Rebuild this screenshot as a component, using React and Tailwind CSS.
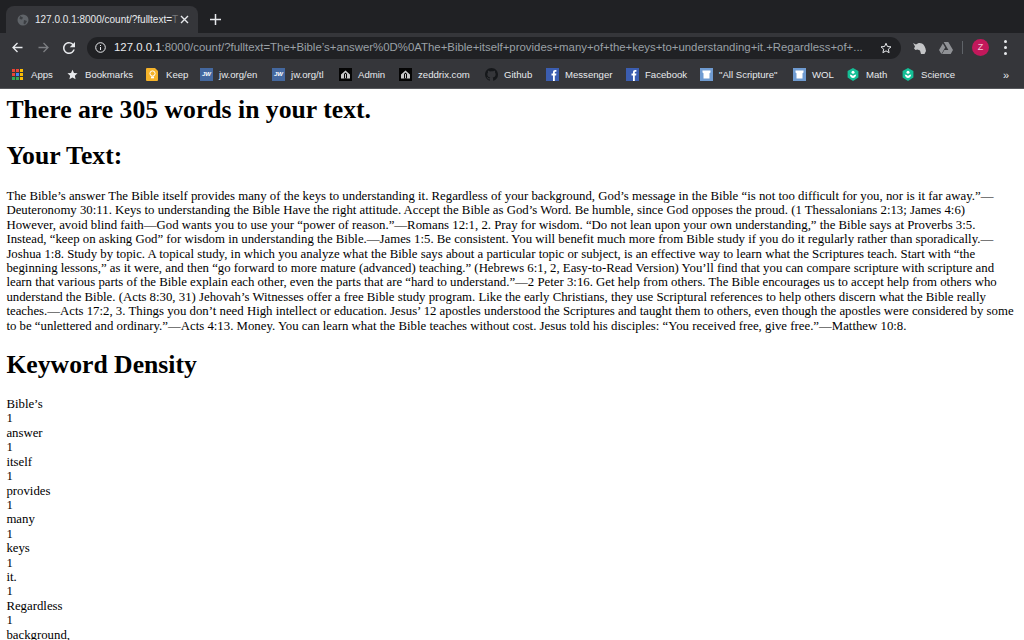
import React from 'react'

const bodyText = `The Bible’s answer The Bible itself provides many of the keys to understanding it. Regardless of your background, God’s message in the Bible “is not too difficult for you, nor is it far away.”—Deuteronomy 30:11. Keys to understanding the Bible Have the right attitude. Accept the Bible as God’s Word. Be humble, since God opposes the proud. (1 Thessalonians 2:13; James 4:6) However, avoid blind faith—God wants you to use your “power of reason.”—Romans 12:1, 2. Pray for wisdom. “Do not lean upon your own understanding,” the Bible says at Proverbs 3:5. Instead, “keep on asking God” for wisdom in understanding the Bible.—James 1:5. Be consistent. You will benefit much more from Bible study if you do it regularly rather than sporadically.—Joshua 1:8. Study by topic. A topical study, in which you analyze what the Bible says about a particular topic or subject, is an effective way to learn what the Scriptures teach. Start with “the beginning lessons,” as it were, and then “go forward to more mature (advanced) teaching.” (Hebrews 6:1, 2, Easy-to-Read Version) You’ll find that you can compare scripture with scripture and learn that various parts of the Bible explain each other, even the parts that are “hard to understand.”—2 Peter 3:16. Get help from others. The Bible encourages us to accept help from others who understand the Bible. (Acts 8:30, 31) Jehovah’s Witnesses offer a free Bible study program. Like the early Christians, they use Scriptural references to help others discern what the Bible really teaches.—Acts 17:2, 3. Things you don’t need High intellect or education. Jesus’ 12 apostles understood the Scriptures and taught them to others, even though the apostles were considered by some to be “unlettered and ordinary.”—Acts 4:13. Money. You can learn what the Bible teaches without cost. Jesus told his disciples: “You received free, give free.”—Matthew 10:8.`

const keywords = ['Bible’s', 'answer', 'itself', 'provides', 'many', 'keys', 'it.', 'Regardless']

function AppsIcon() {
  const colors = ['#ea4335', '#ea4335', '#fbbc04', '#ea4335', '#4285f4', '#fbbc04', '#34a853', '#34a853', '#fbbc04']
  return (
    <div className="grid grid-cols-3 gap-px w-[11px] h-[11px]">
      {colors.map((c, i) => (
        <div key={i} className="w-[3px] h-[3px]" style={{ backgroundColor: c }} />
      ))}
    </div>
  )
}

function StarIcon() {
  return (
    <svg width="11" height="11" viewBox="0 0 24 24" fill="#e8eaed">
      <path d="M12 1.5l3.2 7.2 7.8.8-5.9 5.2 1.7 7.8-6.8-4-6.8 4 1.7-7.8L1 9.5l7.8-.8z" />
    </svg>
  )
}

function KeepIcon() {
  return (
    <svg width="13" height="13" viewBox="0 0 13 13">
      <path d="M1 0h8l3 3v9a1 1 0 01-1 1H1a1 1 0 01-1-1V1a1 1 0 011-1z" fill="#f5b32a" />
      <circle cx="6.5" cy="5.5" r="2.6" fill="none" stroke="#fff" strokeWidth="1" />
      <rect x="5" y="8.5" width="3" height="1.8" fill="#fff" />
    </svg>
  )
}

function JwIcon() {
  return (
    <div className="w-[13px] h-[13px] bg-[#44689f] text-white text-[6px] font-bold italic leading-[13px] text-center">JW</div>
  )
}

function AdminIcon() {
  return (
    <svg width="13" height="13" viewBox="0 0 13 13">
      <rect width="13" height="13" fill="#050505" />
      <path d="M6.5 2.5L11 6.5v4H2v-4z" fill="#c9c9c9" />
      <path d="M6.5 4.5L5 6v4.5h3V6z" fill="#050505" />
      <rect x="6" y="6" width="1" height="4" fill="#c9c9c9" />
    </svg>
  )
}

function GithubIcon() {
  return (
    <svg width="13" height="13" viewBox="0 0 16 16" fill="#16181b">
      <path d="M8 0C3.58 0 0 3.58 0 8c0 3.54 2.29 6.53 5.47 7.59.4.07.55-.17.55-.38v-1.34c-2.23.48-2.7-1.07-2.7-1.07-.36-.93-.89-1.17-.89-1.17-.73-.5.05-.49.05-.49.8.06 1.23.83 1.23.83.71 1.22 1.87.87 2.33.66.07-.52.28-.87.51-1.07-1.78-.2-3.64-.89-3.64-3.95 0-.87.31-1.59.82-2.15-.08-.2-.36-1.02.08-2.12 0 0 .67-.21 2.2.82A7.6 7.6 0 018 3.87c.68 0 1.36.09 2 .27 1.53-1.04 2.2-.82 2.2-.82.44 1.1.16 1.92.08 2.12.51.56.82 1.27.82 2.15 0 3.07-1.87 3.75-3.65 3.95.29.25.54.73.54 1.48v2.2c0 .21.15.46.55.38A8 8 0 0016 8c0-4.42-3.58-8-8-8z" />
    </svg>
  )
}

function FbIcon() {
  return (
    <svg width="13" height="13" viewBox="0 0 13 13">
      <rect width="13" height="13" fill="#3b5db0" />
      <path d="M7 13V7.5H5.5V5.6H7V4.3C7 2.8 7.9 2 9.2 2h1.2v1.8H9.6c-.6 0-.8.3-.8.8v1h1.6l-.3 1.9H8.8V13z" fill="#fff" />
    </svg>
  )
}

function WolIcon() {
  return (
    <svg width="13" height="13" viewBox="0 0 13 13">
      <rect width="13" height="13" fill="#6f9bd1" />
      <path d="M2.5 2.5h8v2l-1 .8V10.5h-6V5.3l-1-.8z" fill="#fff" />
    </svg>
  )
}

function KhanIcon() {
  return (
    <svg width="12" height="13" viewBox="0 0 12 13">
      <path d="M6 0l5.4 3v6.6L6 13 .6 9.6V3z" fill="#14bf96" />
      <circle cx="6" cy="4.3" r="1.5" fill="#fff" />
      <path d="M2.8 6.4c.2 2 1.5 3.3 3.2 3.5 1.7-.2 3-1.500 3.200-3.500-1.500.1-2.600.6-3.200 1.500-.6-.9-1.700-1.400-3.200-1.500z" fill="#fff" />
    </svg>
  )
}

const bookmarks = [
  { label: 'Apps', icon: <AppsIcon />, width: 'w-[55px]', gap: 'gap-[8px]' },
  { label: 'Bookmarks', icon: <StarIcon />, width: 'w-[79px]', gap: 'gap-[7px]' },
  { label: 'Keep', icon: <KeepIcon />, width: 'w-[54px]', gap: 'gap-[7px]' },
  { label: 'jw.org/en', icon: <JwIcon />, width: 'w-[72px]', gap: 'gap-[6px]' },
  { label: 'jw.org/tl', icon: <JwIcon />, width: 'w-[67px]', gap: 'gap-[6px]' },
  { label: 'Admin', icon: <AdminIcon />, width: 'w-[60px]', gap: 'gap-[6px]' },
  { label: 'zeddrix.com', icon: <AdminIcon />, width: 'w-[86px]', gap: 'gap-[6px]' },
  { label: 'Github', icon: <GithubIcon />, width: 'w-[61px]', gap: 'gap-[6px]' },
  { label: 'Messenger', icon: <FbIcon />, width: 'w-[80px]', gap: 'gap-[6px]' },
  { label: 'Facebook', icon: <FbIcon />, width: 'w-[74px]', gap: 'gap-[6px]' },
  { label: '"All Scripture"', icon: <WolIcon />, width: 'w-[93px]', gap: 'gap-[6px]' },
  { label: 'WOL', icon: <WolIcon />, width: 'w-[54px]', gap: 'gap-[6px]' },
  { label: 'Math', icon: <KhanIcon />, width: 'w-[55px]', gap: 'gap-[7px]' },
  { label: 'Science', icon: <KhanIcon />, width: 'w-[90px]', gap: 'gap-[7px]' },
]

function TabStrip() {
  return (
    <div className="flex items-end h-[33px] bg-[#202124] pl-[6px]">
      <div className="flex items-center w-[192px] h-[27px] bg-[#35363a] rounded-t-lg pl-[11px] pr-[9px]">
        <svg width="12" height="12" viewBox="0 0 12 12" className="shrink-0">
          <circle cx="6" cy="6" r="5.5" fill="#5f6368" />
          <path d="M3 2l3 1.5-1 2-2.500-.5zM7 6l3 1-2 3.500-1.500-1z" fill="#3c3f43" />
        </svg>
        <div className="ml-[6px] whitespace-nowrap text-[10px] text-[#e8eaed]">
          127.0.0.1:8000/count/?fulltext=<span className="text-[#77797c]">T</span>
        </div>
        <svg width="9" height="9" viewBox="0 0 9 9" className="ml-auto shrink-0" stroke="#e8eaed" strokeWidth="1.4">
          <path d="M1 1l7 7M8 1L1 8" />
        </svg>
      </div>
      <svg width="11" height="11" viewBox="0 0 11 11" className="ml-[12px] mb-[8px]" stroke="#e8eaed" strokeWidth="1.5">
        <path d="M5.5 0v11M0 5.5h11" />
      </svg>
    </div>
  )
}

function Toolbar() {
  return (
    <div className="flex items-center h-[29px] bg-[#35363a] pl-[12px]">
      <svg width="11" height="11" viewBox="0 0 11 11" fill="none" stroke="#e8eaed" strokeWidth="1.3">
        <path d="M10.5 5.5H1M5.500 1L1 5.500l4.500 4.500" />
      </svg>
      <svg width="11" height="11" viewBox="0 0 11 11" fill="none" stroke="#7c7e82" strokeWidth="1.3" className="ml-[15px]">
        <path d="M.5 5.500H10M5.500 1L10 5.500 5.500 10" />
      </svg>
      <svg width="12" height="12" viewBox="4 4 16 16" fill="#e8eaed" className="ml-[14px]">
        <path d="M17.650 6.350A7.958 7.958 0 0012 4c-4.420 0-7.990 3.580-7.990 8s3.570 8 7.990 8c3.730 0 6.840-2.550 7.730-6h-2.080A5.990 5.990 0 0112 18c-3.310 0-6-2.690-6-6s2.690-6 6-6c1.660 0 3.140.690 4.220 1.780L13 11h7V4l-2.350 2.350z" />
      </svg>
      <div className="flex items-center ml-[12px] w-[814px] h-[22px] rounded-full bg-[#202124] pl-[8px] pr-[9px]">
        <svg width="11" height="11" viewBox="0 0 11 11" fill="none" stroke="#e8eaed" strokeWidth="1" className="shrink-0">
          <circle cx="5.5" cy="5.5" r="4.800" />
          <path d="M5.500 5v3M5.500 3v1" />
        </svg>
        <div className="ml-[8px] whitespace-nowrap text-[11.4px] text-[#9aa0a6]">
          <span className="text-[#e8eaed]">127.0.0.1</span>:8000/count/?fulltext=The+Bible’s+answer%0D%0AThe+Bible+itself+provides+many+of+the+keys+to+understanding+it.+Regardless+of+...
        </div>
        <svg width="12" height="12" viewBox="0 0 24 24" fill="none" stroke="#e8eaed" strokeWidth="2" className="ml-auto shrink-0">
          <path d="M12 2.500l2.900 6.500 7.100.7-5.400 4.700 1.600 7-6.200-3.700-6.200 3.700 1.600-7L2 9.700l7.100-.7z" />
        </svg>
      </div>
      <svg width="13" height="12" viewBox="0 0 13 12" fill="#c4c5c7" className="ml-[12px]">
        <path d="M0 1l3 1.500C4.500 1 7 .500 9 1.500c2 1 3.500 3.500 4 7.500l-1.500 3H8L7 8.500 4.500 7.500 2.500 8 1 6.500l1-2z" />
      </svg>
      <svg width="14" height="12" viewBox="0 0 14 12" fill="#8f9195" className="ml-[13px]">
        <path d="M4.700 0h4.600l4.700 8H9.400zM3.800 1.500L6.200 5.600 2.400 12 0 8zM5.400 8H14l-2.300 4H3z" />
      </svg>
      <div className="ml-[9px] w-px h-[13px] bg-[#5f6368]" />
      <div className="flex items-center justify-center ml-[9px] w-[17px] h-[17px] rounded-full bg-[#c2185b] text-[9px] text-[#f5c6d8]">Z</div>
      <div className="flex flex-col gap-[3px] ml-[15px]">
        <div className="w-[3px] h-[3px] rounded-full bg-[#e8eaed]" />
        <div className="w-[3px] h-[3px] rounded-full bg-[#e8eaed]" />
        <div className="w-[3px] h-[3px] rounded-full bg-[#e8eaed]" />
      </div>
    </div>
  )
}

function BookmarksBar() {
  return (
    <div className="flex items-center h-[27px] bg-[#35363a] pl-[12px] border-b border-[#56585c] text-[9.6px] text-[#e8eaed]">
      {bookmarks.map((b) => (
        <div key={b.label} className={`flex items-center shrink-0 ${b.width} ${b.gap}`}>
          <div className="shrink-0">{b.icon}</div>
          <span className="whitespace-nowrap">{b.label}</span>
        </div>
      ))}
      <span className="ml-[11px] text-[11px] leading-none">»</span>
    </div>
  )
}

export default function App() {
  return (
    <div className="h-screen overflow-hidden bg-white font-['Liberation_Sans',sans-serif]">
      <TabStrip />
      <Toolbar />
      <BookmarksBar />
      <main className="px-[6.4px] font-['Liberation_Serif',serif] text-[12.8px] leading-[14.4px] text-black">
        <h1 className="text-[25.7px] leading-[29px] font-bold mt-[6px] mb-[17px]">There are 305 words in your text.</h1>
        <h1 className="text-[25.7px] leading-[29px] font-bold mb-[19px]">Your Text:</h1>
        <p>{bodyText}</p>
        <h1 className="text-[25.7px] leading-[29px] font-bold mt-[17px] mb-[18px]">Keyword Density</h1>
        {keywords.map((k) => (
          <div key={k}>
            <div>{k}</div>
            <div>1</div>
          </div>
        ))}
        <div>background,</div>
      </main>
    </div>
  )
}
